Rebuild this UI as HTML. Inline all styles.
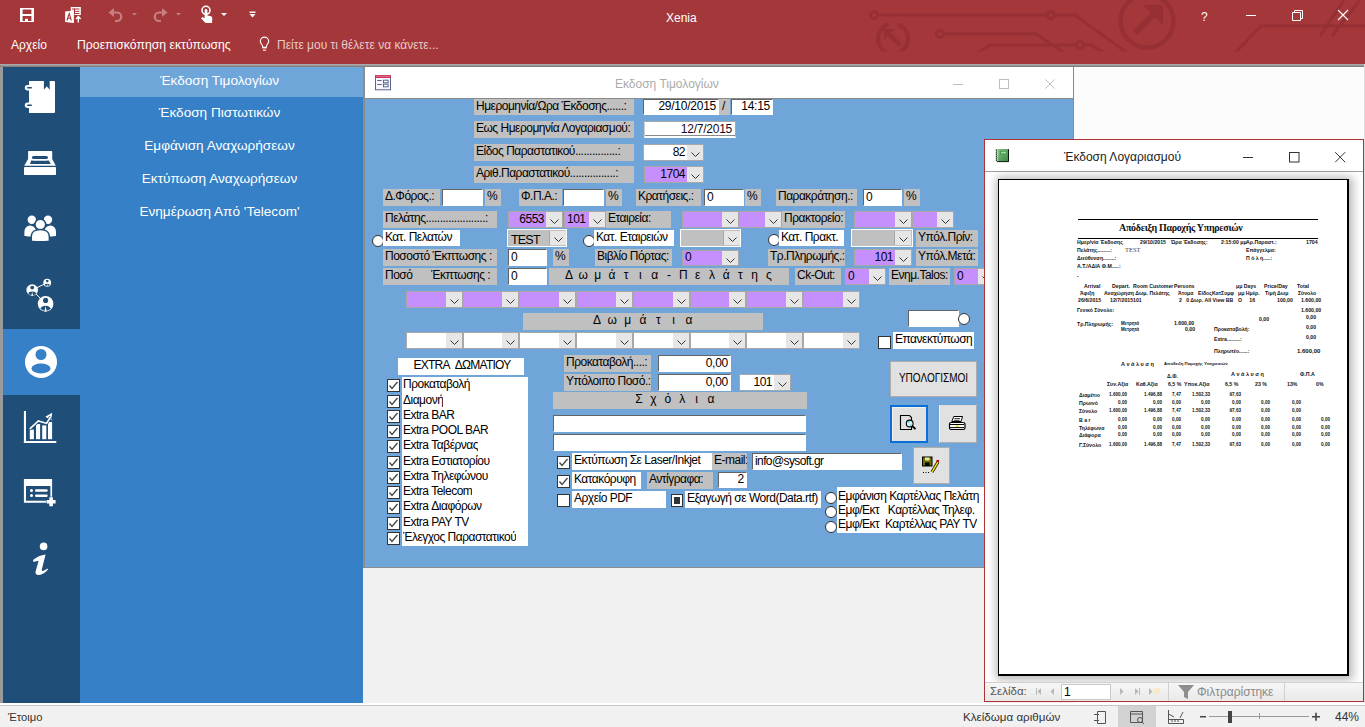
<!DOCTYPE html><html><head><meta charset="utf-8"><style>
html,body{margin:0;padding:0;width:1365px;height:727px;overflow:hidden;background:#F1F1F1;font-family:"Liberation Sans",sans-serif;}
body>div,body>svg{position:absolute;}
div{box-sizing:content-box;}
.t{position:absolute;white-space:nowrap;line-height:1;}
.lb{position:absolute;white-space:nowrap;overflow:hidden;font-size:12px;color:#000;}
.in{position:absolute;white-space:nowrap;overflow:hidden;font-size:12px;color:#000;background:#fff;border-top:1px solid #646464;border-left:1px solid #646464;border-right:1px solid #fff;border-bottom:1px solid #fff;letter-spacing:-0.25px}
.ab{position:absolute}
</style></head><body>
<div style="left:0px;top:0px;width:1365px;height:64px;background:#A4373A;"></div>
<svg style="left:0;top:0" width="1365" height="64" viewBox="0 0 1365 64">
<defs><clipPath id="cl"><rect x="0" y="0" width="1365" height="51.5"/></clipPath></defs>
<g stroke="#963035" stroke-width="3" fill="none" clip-path="url(#cl)">
<path d="M874 15 H1075 L1130 55"/>
<circle cx="874" cy="15" r="3.5" fill="#A4373A"/>
<circle cx="1051" cy="15" r="3.5" fill="#A4373A"/>
<path d="M940 34 H1036 L1068 55"/>
<circle cx="940" cy="34" r="3.5" fill="#A4373A"/>
<path d="M974 55 L990 45 H1091 L1108 55"/>
<circle cx="1080" cy="45" r="3.5" fill="#A4373A"/>
<path d="M897.5 24.5 A15 15 0 1 1 888.5 24.5" stroke-width="4"/>
<path d="M887 32 L900 45" stroke-width="4.5"/>
<path d="M884 29 H895 L884 40 Z" fill="#963035" stroke="none"/>
<circle cx="1147" cy="21" r="26.5" stroke-width="4.5"/>
<path d="M1135 33 L1156 12" stroke-width="6"/>
<path d="M1163 5 V25 L1143 5 Z" fill="#963035" stroke="none"/>
<path d="M1233 55 L1261 26 H1365"/>
<path d="M1320 36 L1344 0 M1332 36 L1360 0"/>
</g></svg>
<svg style="left:0;top:0" width="270" height="30" viewBox="0 0 270 30">
<path d="M20 8 H34 V22 H20 Z M22.6 9.5 V14 H31.4 V9.5 Z M22.6 16 V21 H25 V18.7 H28 V21 H31.4 V16 Z" fill="#fff" fill-rule="evenodd"/>
<path d="M70.8 7 H80.8 V15 H70.8 Z" fill="#fff"/>
<path d="M72 9 H79.5 M72 11.3 H79.5 M72 13.5 H79.5 M74.5 8.5 V14.5" stroke="#A4373A" stroke-width="1"/>
<path d="M65.1 11.5 L73.9 10.5 V23 L65.1 22 Z" fill="#fff"/>
<path d="M67 20.5 L69.2 13.5 L71.3 20.5 M67.8 18.3 H70.6" stroke="#A4373A" stroke-width="1.1" fill="none"/>
<path d="M78.3 22.6 V17 M76 19 L78.3 16.5 L80.6 19" stroke="#fff" stroke-width="1.4" fill="none"/>
<g stroke="#C57F82" stroke-width="2.2" fill="none">
<path d="M111 12.5 H117 A4.2 4.2 0 0 1 117 21 H115"/>
<path d="M165 12.5 H159 A4.2 4.2 0 0 0 159 21 H161"/>
</g>
<path d="M108.5 12.5 L114 8 V17 Z" fill="#C57F82"/>
<path d="M167.5 12.5 L162 8 V17 Z" fill="#C57F82"/>
<path d="M132 13 H137 L134.5 15.5 Z" fill="#C57F82"/>
<path d="M176 13 H181 L178.5 15.5 Z" fill="#C57F82"/>
<circle cx="206" cy="10.3" r="4" fill="none" stroke="#fff" stroke-width="1.6"/>
<path d="M204.6 10.5 A1.4 1.4 0 0 1 207.4 10.5 V15.5 L211 16.3 Q212.4 16.8 212.3 18.5 L212 23 H205.5 L201 18.3 L202.5 17 L204.6 18.2 Z" fill="#fff"/>
<path d="M221 13 H227 L224 16 Z" fill="#fff"/>
<rect x="249.5" y="11.5" width="6" height="1.4" fill="#fff"/>
<path d="M249.5 14 H255.5 L252.5 17.5 Z" fill="#fff"/>
</svg>
<div class="t" style="left:666px;top:11.5px;font-size:12px;color:#fff;">Xenia</div>
<svg style="left:1190;top:0" width="175" height="32" viewBox="1190 0 175 32">
<text x="1201" y="20.5" font-size="12" font-family="Liberation Sans" fill="#fff">?</text>
<rect x="1246" y="15" width="10" height="1" fill="#fff"/>
<path d="M1292.5 12.5 H1300.5 V20.5 H1292.5 Z M1294.5 12.5 V10.5 H1302.5 V18.5 H1300.5" fill="none" stroke="#fff" stroke-width="1"/>
<path d="M1338 10 L1348 20 M1348 10 L1338 20" stroke="#fff" stroke-width="1.1"/>
</svg>
<div class="t" style="left:11px;top:39px;font-size:12px;color:#fff;">Αρχείο</div>
<div class="t" style="left:77px;top:39px;font-size:12.25px;color:#fff;">Προεπισκόπηση εκτύπωσης</div>
<svg style="left:256;top:35" width="14" height="18" viewBox="0 0 14 18">
<path d="M6.6 12 V11 C6.6 9.8 4.3 8.8 4.3 6.3 A4.2 4.2 0 0 1 12.7 6.3 C12.7 8.8 10.4 9.8 10.4 11 V12" fill="none" stroke="#fff" stroke-width="1.1"/>
<path d="M6.2 12.6 H10.8" stroke="#fff" stroke-width="1.6"/>
<path d="M7 15.2 H10" stroke="#fff" stroke-width="1.1"/>
</svg>
<div class="t" style="left:277px;top:39px;font-size:12px;color:#E9C9CA;">Πείτε μου τι θέλετε να κάνετε...</div>
<div style="left:0px;top:64px;width:1365px;height:1px;background:#A9A9A9;"></div>
<div style="left:0px;top:65px;width:1365px;height:1px;background:#979797;"></div>
<div style="left:0px;top:66px;width:1365px;height:1px;background:#857E7A;"></div>
<div style="left:0px;top:67px;width:3px;height:636px;background:#9A9A9A;"></div>
<div style="left:3px;top:67px;width:77px;height:636px;background:#1F4E79;"></div>
<div style="left:3px;top:329px;width:77px;height:66px;background:#3580C6;"></div>
<div style="left:80px;top:67px;width:283px;height:636px;background:#3580C6;"></div>
<div style="left:80px;top:67px;width:283px;height:30px;background:#6FA6DA;"></div>
<div style="left:363px;top:67px;width:2px;height:501px;background:#8C8C8C;"></div>
<div style="left:363px;top:568px;width:2px;height:135px;background:#F1F1F1;"></div>
<div class="t" style="left:78px;top:74px;font-size:13.6px;color:#fff;width:283px;text-align:center;">Έκδοση Τιμολογίων</div>
<div class="t" style="left:78px;top:106px;font-size:13.6px;color:#fff;width:283px;text-align:center;">Έκδοση Πιστωτικών</div>
<div class="t" style="left:78px;top:139px;font-size:13.6px;color:#fff;width:283px;text-align:center;">Εμφάνιση Αναχωρήσεων</div>
<div class="t" style="left:78px;top:172px;font-size:13.6px;color:#fff;width:283px;text-align:center;">Εκτύπωση Αναχωρήσεων</div>
<div class="t" style="left:78px;top:205px;font-size:13.6px;color:#fff;width:283px;text-align:center;">Ενημέρωση Από 'Telecom'</div>
<svg style="left:0;top:67" width="80" height="560" viewBox="0 67 80 560">
<g fill="#fff">
<!-- 1 notebook -->
<path d="M29 81 H43.9 V89.8 L46.8 86.3 L49.7 89.8 V81 H54 Q55 81 55 82 V112 Q55 113 54 113 H29 Z"/>
<rect x="24.8" y="85" width="8.5" height="5.5" rx="2.75"/>
<rect x="24.8" y="102.5" width="8.5" height="5.5" rx="2.75"/>
</g>
<rect x="27" y="87" width="5" height="1.6" rx="0.8" fill="#1F4E79"/>
<rect x="27" y="104.5" width="5" height="1.6" rx="0.8" fill="#1F4E79"/>
<!-- 2 bed -->
<path d="M28.6 151 H51.7 Q52.2 151 52.2 152 V159 L55.8 165.8 H24.2 L28.1 159 V152 Q28.1 151 28.6 151 Z" fill="#fff"/>
<rect x="24" y="167" width="32" height="8" rx="0.8" fill="#fff"/>
<rect x="31.9" y="155.9" width="16.1" height="3.2" rx="1.6" fill="#1F4E79"/>
<path d="M30 164 L31.2 160.6 Q32.5 160.2 33.5 160.8 H46.5 Q47.5 160.2 48.8 160.6 L50.8 164 Z" fill="#1F4E79"/>
<!-- 3 people -->
<g fill="#fff" stroke="#1F4E79" stroke-width="1.6">
<circle cx="31.8" cy="219.8" r="5"/>
<path d="M23.6 236.5 V231.5 C23.6 227.5 26.5 224.8 30 224.8 C33.5 224.8 37 227.5 37 231.5 V237.3 Q30 237.8 23.6 236.5 Z"/>
<circle cx="48" cy="219.8" r="5"/>
<path d="M43.4 237.3 V231.5 C43.4 227.5 46.9 224.8 50.4 224.8 C53.9 224.8 56.8 227.5 56.8 231.5 V236.5 Q50.4 237.8 43.4 237.3 Z"/>
<circle cx="40.3" cy="224.6" r="5.4"/>
<path d="M31.2 241.2 V236.5 C31.2 232.2 35 229.5 40.3 229.5 C45.6 229.5 49.4 232.2 49.4 236.5 V241.2 Q40.3 242.6 31.2 241.2 Z"/>
</g>
<!-- 4 network -->
<path d="M32.2 290 L47.2 282.7 M32.2 290 L45.6 303.7" stroke="#fff" stroke-width="1"/>
<clipPath id="p1"><circle cx="47.2" cy="282.7" r="3.30"/></clipPath>
<circle cx="47.2" cy="282.7" r="3.9" fill="#fff"/>
<g clip-path="url(#p1)" fill="#1F4E79">
<circle cx="47.2" cy="281.06" r="1.29"/>
<ellipse cx="47.2" cy="286.01" rx="2.81" ry="2.34"/>
</g>
<path d="M47.2 283.87 L46.62 286.60 H47.79 Z" fill="#fff"/>
<clipPath id="p2"><circle cx="32.2" cy="290" r="5.20"/></clipPath>
<circle cx="32.2" cy="290" r="5.8" fill="#fff"/>
<g clip-path="url(#p2)" fill="#1F4E79">
<circle cx="32.2" cy="287.56" r="1.91"/>
<ellipse cx="32.2" cy="294.93" rx="4.18" ry="3.48"/>
</g>
<path d="M32.2 291.74 L31.33 295.80 H33.07 Z" fill="#fff"/>
<clipPath id="p3"><circle cx="45.6" cy="303.7" r="7.20"/></clipPath>
<circle cx="45.6" cy="303.7" r="7.8" fill="#fff"/>
<g clip-path="url(#p3)" fill="#1F4E79">
<circle cx="45.6" cy="300.42" r="2.57"/>
<ellipse cx="45.6" cy="310.33" rx="5.62" ry="4.68"/>
</g>
<path d="M45.6 306.04 L44.43 311.50 H46.77 Z" fill="#fff"/>
<!-- 5 person circle -->
<circle cx="41" cy="362" r="16" fill="#fff"/>
<circle cx="41" cy="354.5" r="5.5" fill="#3580C6"/>
<ellipse cx="41" cy="368.5" rx="9.5" ry="5" fill="#3580C6"/>
<!-- 6 chart -->
<g fill="#fff">
<rect x="23.9" y="411" width="2.1" height="32"/>
<rect x="23.9" y="441" width="32.4" height="2"/>
<rect x="29.8" y="429.6" width="4.1" height="9.6"/>
<rect x="36" y="424" width="4.1" height="15.2"/>
<rect x="42.2" y="425.4" width="4.1" height="13.8"/>
<rect x="48" y="422" width="4.1" height="17.2"/>
<path d="M45.3 416.8 L52.1 412.7 L51.5 420.6 Z"/>
</g>
<path d="M29.8 428.9 L38.4 421 L46.6 423.4 L50.8 416.5" fill="none" stroke="#1F4E79" stroke-width="3.2"/>
<path d="M29.8 428.9 L38.4 421 L46.6 423.4 L50.8 416.5" fill="none" stroke="#fff" stroke-width="1.6"/>
<!-- 7 list window -->
<path d="M23.9 479.1 H52.1 V502.8 H23.9 Z M26 486 V500.8 H50.4 V486 Z" fill="#fff" fill-rule="evenodd"/>
<circle cx="31.5" cy="490.4" r="1.5" fill="#fff"/>
<circle cx="31.5" cy="495.6" r="1.5" fill="#fff"/>
<rect x="35" y="489.2" width="12.7" height="2.5" rx="1.2" fill="#fff"/>
<rect x="35" y="494.4" width="12.7" height="2.5" rx="1.2" fill="#fff"/>
<path d="M51.1 496.8 V506.8 M46.1 501.8 H56.1" stroke="#1F4E79" stroke-width="7"/>
<path d="M51.1 497.3 V506.3 M46.6 501.8 H55.6" stroke="#fff" stroke-width="3.6"/>
<!-- 8 info i -->
<circle cx="43.6" cy="546.4" r="3.8" fill="#fff"/>
<path d="M33 560 Q38.5 555.2 45.6 554.4 L41.8 569.5 Q41.4 571.3 42.6 571 Q45 570.3 47.5 568.4 L48 569.6 Q44 574.6 38.8 575 Q35 575.2 35.6 571.6 L38.6 560.8 Q36.2 561.2 33.6 562 Z" fill="#fff"/>
</svg>
<div style="left:1074px;top:67px;width:291px;height:636px;background:#FCFCFC;"></div>
<div style="left:365px;top:568px;width:709px;height:135px;background:#F1F1F1;"></div>
<div style="left:0px;top:703px;width:1365px;height:2px;background:#FFFFFF;"></div>
<div style="left:0px;top:705px;width:1365px;height:1px;background:#C6C6C6;"></div>
<div style="left:0px;top:706px;width:1365px;height:21px;background:#F1F1F1;"></div>
<div style="left:1364px;top:64px;width:1px;height:639px;background:#DEDEDE;"></div>
<div style="left:365px;top:67px;width:708px;height:31px;background:#FFFFFF;"></div>
<div style="left:365px;top:98px;width:708px;height:1px;background:#8A8A8A;"></div>
<div style="left:365px;top:99px;width:708px;height:468px;background:#6FA5D8;"></div>
<div style="left:1073px;top:67px;width:1px;height:501px;background:#8A8A8A;"></div>
<div style="left:365px;top:567px;width:709px;height:1px;background:#8A8A8A;"></div>
<svg style="left:374;top:74" width="18" height="17" viewBox="0 0 18 17">
<rect x="1.5" y="1.5" width="15" height="14.3" fill="#F6F6FC" stroke="#4A5684" stroke-width="0.9"/>
<rect x="1" y="1" width="16" height="3" fill="#C8325A"/>
<rect x="2" y="1.8" width="14" height="1" fill="#E07A95"/>
<rect x="3.2" y="6.1" width="4.5" height="0.9" fill="#4A5684"/>
<rect x="3.2" y="10.1" width="4.5" height="0.9" fill="#4A5684"/>
<rect x="9.5" y="6.2" width="4.6" height="2.6" fill="#fff" stroke="#4A5684" stroke-width="0.9"/>
<rect x="9.5" y="10.2" width="4.6" height="2.6" fill="#fff" stroke="#4A5684" stroke-width="0.9"/>
</svg>
<div class="t" style="left:615px;top:78px;font-size:12px;color:#ABABAB;">Εκδοση Τιμολογίων</div>
<svg style="left:940;top:70" width="125" height="25" viewBox="940 70 125 25">
<rect x="953" y="84" width="10" height="1" fill="#BDBDBD"/>
<rect x="999.5" y="79.5" width="9" height="9" fill="none" stroke="#BDBDBD" stroke-width="1"/>
<path d="M1045.5 79.5 L1054.5 88.5 M1054.5 79.5 L1045.5 88.5" stroke="#BDBDBD" stroke-width="1"/>
</svg>
<div class="lb" style="left:474px;top:99px;width:158px;height:16px;line-height:14px;background:#C0C0C0;padding-left:2px;text-align:left;letter-spacing:-0.5px;">Ημερομηνία/Ωρα Έκδοσης......:</div>
<div style="left:719px;top:99px;width:11px;height:16px;background:#C0C0C0;"></div>
<div class="in" style="left:643px;top:99px;width:72px;height:14px;line-height:13px;text-align:right;padding-right:2px;">29/10/2015</div>
<div class="t" style="left:722px;top:100px;font-size:12px;color:#000;">/</div>
<div class="in" style="left:731px;top:99px;width:38px;height:14px;line-height:13px;text-align:right;padding-right:2px;border-top:1px solid #646464;border-left:1px solid #646464;">14:15</div>
<div class="lb" style="left:474px;top:121px;width:158px;height:17px;line-height:15px;background:#C0C0C0;padding-left:2px;text-align:left;letter-spacing:-0.5px;">Εως Ημερομηνία Λογαριασμού:</div>
<div class="in" style="left:644px;top:121px;width:87px;height:14px;line-height:14px;text-align:right;padding-right:3px;border:1px solid #A8A8A8;border-left-color:#D0D0D0;border-bottom:2px solid #fff;box-shadow:inset 0 -1px 0 #8A8A8A;color:#1a0a20">12/7/2015</div>
<div class="lb" style="left:474px;top:144px;width:158px;height:17px;line-height:15px;background:#C0C0C0;padding-left:2px;text-align:left;letter-spacing:-0.5px;">Είδος Παραστατικού...............:</div>
<div style="left:643px;top:144px;width:61px;height:17px;background:#A8A8A8"></div>
<div class="lb" style="left:644px;top:145px;width:41px;height:15px;line-height:14px;background:#FFFFFF;text-align:right;padding-right:2px;letter-spacing:-0.5px">82</div>
<div style="left:687px;top:145px;width:16px;height:15px;background:#E6E6E6"><svg width="9" height="5" viewBox="0 0 9 5" style="position:absolute;left:4px;top:7px"><path d="M0.5 0.5 L4.5 4.5 L8.5 0.5" fill="none" stroke="#333" stroke-width="1"/></svg></div>
<div class="lb" style="left:474px;top:166px;width:158px;height:17px;line-height:15px;background:#C0C0C0;padding-left:2px;text-align:left;letter-spacing:-0.5px;">Αριθ.Παραστατικού................:</div>
<div style="left:644px;top:166px;width:60px;height:17px;background:#A8A8A8"></div>
<div class="lb" style="left:645px;top:167px;width:40px;height:15px;line-height:14px;background:#C590FE;text-align:right;padding-right:2px;letter-spacing:-0.5px">1704</div>
<div style="left:687px;top:167px;width:16px;height:15px;background:#E6E6E6"><svg width="9" height="5" viewBox="0 0 9 5" style="position:absolute;left:4px;top:7px"><path d="M0.5 0.5 L4.5 4.5 L8.5 0.5" fill="none" stroke="#333" stroke-width="1"/></svg></div>
<div class="lb" style="left:383px;top:189px;width:55px;height:17px;line-height:15px;background:#C0C0C0;padding-left:2px;text-align:left;letter-spacing:-0.5px;">Δ.Φόρος.:</div>
<div class="in" style="left:442px;top:189px;width:37px;height:15px;line-height:14px;text-align:left;padding-left:2px;"></div>
<div class="lb" style="left:485px;top:189px;width:14px;height:17px;line-height:15px;background:#C0C0C0;padding-left:2px;text-align:left;letter-spacing:-0.5px;">%</div>
<div class="lb" style="left:519px;top:189px;width:41px;height:17px;line-height:15px;background:#C0C0C0;padding-left:2px;text-align:left;letter-spacing:-0.5px;">Φ.Π.Α.:</div>
<div class="in" style="left:563px;top:189px;width:37px;height:15px;line-height:14px;text-align:left;padding-left:2px;"></div>
<div class="lb" style="left:606px;top:189px;width:14px;height:17px;line-height:15px;background:#C0C0C0;padding-left:2px;text-align:left;letter-spacing:-0.5px;">%</div>
<div class="lb" style="left:636px;top:189px;width:63px;height:17px;line-height:15px;background:#C0C0C0;padding-left:2px;text-align:left;letter-spacing:-0.5px;">Κρατήσεις.:</div>
<div class="in" style="left:704px;top:189px;width:36px;height:15px;line-height:14px;text-align:left;padding-left:2px;">0</div>
<div class="lb" style="left:745px;top:189px;width:14px;height:17px;line-height:15px;background:#C0C0C0;padding-left:2px;text-align:left;letter-spacing:-0.5px;">%</div>
<div class="lb" style="left:776px;top:189px;width:79px;height:17px;line-height:15px;background:#C0C0C0;padding-left:2px;text-align:left;letter-spacing:-0.5px;">Παρακράτηση.:</div>
<div class="in" style="left:863px;top:189px;width:35px;height:15px;line-height:14px;text-align:left;padding-left:2px;">0</div>
<div class="lb" style="left:904px;top:189px;width:14px;height:17px;line-height:15px;background:#C0C0C0;padding-left:2px;text-align:left;letter-spacing:-0.5px;">%</div>
<div class="lb" style="left:383px;top:211px;width:112px;height:17px;line-height:15px;background:#C0C0C0;padding-left:2px;text-align:left;letter-spacing:-0.5px;">Πελάτης.....................:</div>
<div style="left:508px;top:211px;width:55px;height:17px;background:#A8A8A8"></div>
<div class="lb" style="left:509px;top:212px;width:35px;height:15px;line-height:14px;background:#C590FE;text-align:right;padding-right:2px;letter-spacing:-0.5px">6553</div>
<div style="left:546px;top:212px;width:16px;height:15px;background:#E6E6E6"><svg width="9" height="5" viewBox="0 0 9 5" style="position:absolute;left:4px;top:7px"><path d="M0.5 0.5 L4.5 4.5 L8.5 0.5" fill="none" stroke="#333" stroke-width="1"/></svg></div>
<div style="left:564px;top:211px;width:42px;height:17px;background:#A8A8A8"></div>
<div class="lb" style="left:565px;top:212px;width:22px;height:15px;line-height:14px;background:#C590FE;text-align:left;padding-left:2px;letter-spacing:-0.5px">101</div>
<div style="left:589px;top:212px;width:16px;height:15px;background:#E6E6E6"><svg width="9" height="5" viewBox="0 0 9 5" style="position:absolute;left:4px;top:7px"><path d="M0.5 0.5 L4.5 4.5 L8.5 0.5" fill="none" stroke="#333" stroke-width="1"/></svg></div>
<div class="lb" style="left:606px;top:211px;width:63px;height:17px;line-height:15px;background:#C0C0C0;padding-left:2px;text-align:left;letter-spacing:-0.5px;">Εταιρεία:</div>
<div style="left:682px;top:211px;width:57px;height:17px;background:#A8A8A8"></div>
<div class="lb" style="left:683px;top:212px;width:37px;height:15px;line-height:14px;background:#C590FE;text-align:right;padding-right:2px;letter-spacing:-0.5px"></div>
<div style="left:722px;top:212px;width:16px;height:15px;background:#E6E6E6"><svg width="9" height="5" viewBox="0 0 9 5" style="position:absolute;left:4px;top:7px"><path d="M0.5 0.5 L4.5 4.5 L8.5 0.5" fill="none" stroke="#333" stroke-width="1"/></svg></div>
<div style="left:738px;top:211px;width:44px;height:17px;background:#A8A8A8"></div>
<div class="lb" style="left:739px;top:212px;width:24px;height:15px;line-height:14px;background:#C590FE;text-align:right;padding-right:2px;letter-spacing:-0.5px"></div>
<div style="left:765px;top:212px;width:16px;height:15px;background:#E6E6E6"><svg width="9" height="5" viewBox="0 0 9 5" style="position:absolute;left:4px;top:7px"><path d="M0.5 0.5 L4.5 4.5 L8.5 0.5" fill="none" stroke="#333" stroke-width="1"/></svg></div>
<div class="lb" style="left:782px;top:211px;width:61px;height:17px;line-height:15px;background:#C0C0C0;padding-left:2px;text-align:left;letter-spacing:-0.5px;">Πρακτορείο:</div>
<div style="left:854px;top:211px;width:58px;height:17px;background:#A8A8A8"></div>
<div class="lb" style="left:855px;top:212px;width:38px;height:15px;line-height:14px;background:#C590FE;text-align:right;padding-right:2px;letter-spacing:-0.5px"></div>
<div style="left:895px;top:212px;width:16px;height:15px;background:#E6E6E6"><svg width="9" height="5" viewBox="0 0 9 5" style="position:absolute;left:4px;top:7px"><path d="M0.5 0.5 L4.5 4.5 L8.5 0.5" fill="none" stroke="#333" stroke-width="1"/></svg></div>
<div style="left:912px;top:211px;width:42px;height:17px;background:#A8A8A8"></div>
<div class="lb" style="left:913px;top:212px;width:22px;height:15px;line-height:14px;background:#C590FE;text-align:right;padding-right:2px;letter-spacing:-0.5px"></div>
<div style="left:937px;top:212px;width:16px;height:15px;background:#E6E6E6"><svg width="9" height="5" viewBox="0 0 9 5" style="position:absolute;left:4px;top:7px"><path d="M0.5 0.5 L4.5 4.5 L8.5 0.5" fill="none" stroke="#333" stroke-width="1"/></svg></div>
<svg style="left:370.5px;top:233.5px" width="14" height="14"><circle cx="7" cy="7" r="5.5" fill="#fff" stroke="#333" stroke-width="1"/></svg>
<div class="lb" style="left:383px;top:230px;width:75px;height:16px;line-height:14px;background:#FFFFFF;padding-left:2px;text-align:left;letter-spacing:-0.5px;">Κατ. Πελατών</div>
<div style="left:507px;top:229px;width:58px;height:16px;background:#C0C0C0;border:1px solid #fff"></div>
<div class="t" style="left:511px;top:234px;font-size:12.5px;color:#000;letter-spacing:-0.8px;">TEST</div>
<div style="left:549px;top:231px;width:16px;height:14px;background:#E6E6E6;border-left:1px solid #A8A8A8"><svg width="9" height="5" viewBox="0 0 9 5" style="position:absolute;left:4px;top:6px"><path d="M0.5 0.5 L4.5 4.5 L8.5 0.5" fill="none" stroke="#333" stroke-width="1"/></svg></div>
<svg style="left:582px;top:233.5px" width="14" height="14"><circle cx="7" cy="7" r="5.5" fill="#fff" stroke="#333" stroke-width="1"/></svg>
<div class="lb" style="left:594px;top:230px;width:78px;height:16px;line-height:14px;background:#FFFFFF;padding-left:2px;text-align:left;letter-spacing:-0.5px;">Κατ. Εταιρειών</div>
<div style="left:680px;top:229px;width:59px;height:16px;background:#C0C0C0;border:1px solid #fff"></div>
<div style="left:723px;top:231px;width:16px;height:14px;background:#E6E6E6;border-left:1px solid #A8A8A8"><svg width="9" height="5" viewBox="0 0 9 5" style="position:absolute;left:4px;top:6px"><path d="M0.5 0.5 L4.5 4.5 L8.5 0.5" fill="none" stroke="#333" stroke-width="1"/></svg></div>
<svg style="left:766.5px;top:233px" width="14" height="14"><circle cx="7" cy="7" r="5.5" fill="#fff" stroke="#333" stroke-width="1"/></svg>
<div class="lb" style="left:779px;top:230px;width:63px;height:16px;line-height:14px;background:#FFFFFF;padding-left:2px;text-align:left;letter-spacing:-0.5px;">Κατ. Πρακτ.</div>
<div style="left:851px;top:229px;width:60px;height:16px;background:#C0C0C0;border:1px solid #fff"></div>
<div style="left:894px;top:231px;width:16px;height:14px;background:#E6E6E6;border-left:1px solid #A8A8A8"><svg width="9" height="5" viewBox="0 0 9 5" style="position:absolute;left:4px;top:6px"><path d="M0.5 0.5 L4.5 4.5 L8.5 0.5" fill="none" stroke="#333" stroke-width="1"/></svg></div>
<div class="lb" style="left:916px;top:230px;width:60px;height:17px;line-height:15px;background:#C0C0C0;padding-left:2px;text-align:left;letter-spacing:-0.5px;">Υπόλ.Πρίν:</div>
<div class="lb" style="left:383px;top:249px;width:112px;height:17px;line-height:15px;background:#C0C0C0;padding-left:2px;text-align:left;letter-spacing:-0.5px;">Ποσοστό Έκπτωσης :</div>
<div class="in" style="left:508px;top:249px;width:35px;height:15px;line-height:14px;text-align:left;padding-left:2px;">0</div>
<div class="lb" style="left:553px;top:249px;width:14px;height:17px;line-height:15px;background:#C0C0C0;padding-left:2px;text-align:left;letter-spacing:-0.5px;">%</div>
<div class="lb" style="left:595px;top:249px;width:75px;height:17px;line-height:15px;background:#C0C0C0;padding-left:2px;text-align:left;letter-spacing:-0.5px;">Βιβλίο Πόρτας:</div>
<div style="left:682px;top:250px;width:57px;height:16px;background:#A8A8A8"></div>
<div class="lb" style="left:683px;top:251px;width:37px;height:14px;line-height:13px;background:#C590FE;text-align:left;padding-left:2px;letter-spacing:-0.5px">0</div>
<div style="left:722px;top:251px;width:16px;height:14px;background:#E6E6E6"><svg width="9" height="5" viewBox="0 0 9 5" style="position:absolute;left:4px;top:7px"><path d="M0.5 0.5 L4.5 4.5 L8.5 0.5" fill="none" stroke="#333" stroke-width="1"/></svg></div>
<div class="lb" style="left:768px;top:249px;width:75px;height:17px;line-height:15px;background:#C0C0C0;padding-left:2px;text-align:left;letter-spacing:-0.5px;">Τρ.Πληρωμής.:</div>
<div style="left:854px;top:249px;width:58px;height:17px;background:#A8A8A8"></div>
<div class="lb" style="left:855px;top:250px;width:38px;height:15px;line-height:14px;background:#C590FE;text-align:right;padding-right:2px;letter-spacing:-0.5px">101</div>
<div style="left:895px;top:250px;width:16px;height:15px;background:#E6E6E6"><svg width="9" height="5" viewBox="0 0 9 5" style="position:absolute;left:4px;top:7px"><path d="M0.5 0.5 L4.5 4.5 L8.5 0.5" fill="none" stroke="#333" stroke-width="1"/></svg></div>
<div class="lb" style="left:916px;top:249px;width:60px;height:17px;line-height:15px;background:#C0C0C0;padding-left:2px;text-align:left;letter-spacing:-0.5px;">Υπόλ.Μετά:</div>
<div class="lb" style="left:383px;top:268px;width:112px;height:17px;line-height:15px;background:#C0C0C0;padding-left:2px;text-align:left;letter-spacing:-0.5px;">Ποσό</div>
<div class="lb" style="left:431px;top:268px;width:66px;height:17px;line-height:15px;background:transparent;padding-left:0px;text-align:left;letter-spacing:-0.5px;">Έκπτωσης :</div>
<div class="in" style="left:508px;top:268px;width:35px;height:15px;line-height:14px;text-align:left;padding-left:2px;">0</div>
<div class="lb" style="left:549px;top:268px;width:238px;height:17px;line-height:15px;background:#C0C0C0;padding-left:2px;text-align:left;letter-spacing:-0.5px;"></div>
<div class="t" style="left:559.0px;top:268px;width:20px;height:17px;line-height:15px;text-align:center;font-size:12px;color:#000">Δ</div>
<div class="t" style="left:573.3px;top:268px;width:20px;height:17px;line-height:15px;text-align:center;font-size:12px;color:#000">ω</div>
<div class="t" style="left:587.6px;top:268px;width:20px;height:17px;line-height:15px;text-align:center;font-size:12px;color:#000">μ</div>
<div class="t" style="left:601.9px;top:268px;width:20px;height:17px;line-height:15px;text-align:center;font-size:12px;color:#000">ά</div>
<div class="t" style="left:616.1px;top:268px;width:20px;height:17px;line-height:15px;text-align:center;font-size:12px;color:#000">τ</div>
<div class="t" style="left:630.4px;top:268px;width:20px;height:17px;line-height:15px;text-align:center;font-size:12px;color:#000">ι</div>
<div class="t" style="left:644.7px;top:268px;width:20px;height:17px;line-height:15px;text-align:center;font-size:12px;color:#000">α</div>
<div class="t" style="left:659.0px;top:268px;width:20px;height:17px;line-height:15px;text-align:center;font-size:12px;color:#000">-</div>
<div class="t" style="left:673.3px;top:268px;width:20px;height:17px;line-height:15px;text-align:center;font-size:12px;color:#000">Π</div>
<div class="t" style="left:687.6px;top:268px;width:20px;height:17px;line-height:15px;text-align:center;font-size:12px;color:#000">ε</div>
<div class="t" style="left:701.9px;top:268px;width:20px;height:17px;line-height:15px;text-align:center;font-size:12px;color:#000">λ</div>
<div class="t" style="left:716.1px;top:268px;width:20px;height:17px;line-height:15px;text-align:center;font-size:12px;color:#000">ά</div>
<div class="t" style="left:730.4px;top:268px;width:20px;height:17px;line-height:15px;text-align:center;font-size:12px;color:#000">τ</div>
<div class="t" style="left:744.7px;top:268px;width:20px;height:17px;line-height:15px;text-align:center;font-size:12px;color:#000">η</div>
<div class="t" style="left:759.0px;top:268px;width:20px;height:17px;line-height:15px;text-align:center;font-size:12px;color:#000">ς</div>
<div class="lb" style="left:795px;top:268px;width:44px;height:17px;line-height:15px;background:#C0C0C0;padding-left:2px;text-align:left;letter-spacing:-0.5px;">Ck-Out:</div>
<div style="left:845px;top:268px;width:41px;height:17px;background:#A8A8A8"></div>
<div class="lb" style="left:846px;top:269px;width:21px;height:15px;line-height:14px;background:#C590FE;text-align:left;padding-left:2px;letter-spacing:-0.5px">0</div>
<div style="left:869px;top:269px;width:16px;height:15px;background:#E6E6E6"><svg width="9" height="5" viewBox="0 0 9 5" style="position:absolute;left:4px;top:7px"><path d="M0.5 0.5 L4.5 4.5 L8.5 0.5" fill="none" stroke="#333" stroke-width="1"/></svg></div>
<div class="lb" style="left:889px;top:268px;width:59px;height:17px;line-height:15px;background:#C0C0C0;padding-left:2px;text-align:left;letter-spacing:-0.5px;">Ενημ.Talos:</div>
<div style="left:954px;top:268px;width:41px;height:17px;background:#A8A8A8"></div>
<div class="lb" style="left:955px;top:269px;width:21px;height:15px;line-height:14px;background:#C590FE;text-align:left;padding-left:2px;letter-spacing:-0.5px">0</div>
<div style="left:978px;top:269px;width:16px;height:15px;background:#E6E6E6"><svg width="9" height="5" viewBox="0 0 9 5" style="position:absolute;left:4px;top:7px"><path d="M0.5 0.5 L4.5 4.5 L8.5 0.5" fill="none" stroke="#333" stroke-width="1"/></svg></div>
<div style="left:406px;top:291px;width:57px;height:17px;background:#A8A8A8"></div>
<div class="lb" style="left:407px;top:292px;width:37px;height:15px;line-height:14px;background:#C590FE;text-align:right;padding-right:2px;letter-spacing:-0.5px"></div>
<div style="left:446px;top:292px;width:16px;height:15px;background:#E6E6E6"><svg width="9" height="5" viewBox="0 0 9 5" style="position:absolute;left:4px;top:7px"><path d="M0.5 0.5 L4.5 4.5 L8.5 0.5" fill="none" stroke="#333" stroke-width="1"/></svg></div>
<div style="left:463px;top:291px;width:56px;height:17px;background:#A8A8A8"></div>
<div class="lb" style="left:464px;top:292px;width:36px;height:15px;line-height:14px;background:#C590FE;text-align:right;padding-right:2px;letter-spacing:-0.5px"></div>
<div style="left:502px;top:292px;width:16px;height:15px;background:#E6E6E6"><svg width="9" height="5" viewBox="0 0 9 5" style="position:absolute;left:4px;top:7px"><path d="M0.5 0.5 L4.5 4.5 L8.5 0.5" fill="none" stroke="#333" stroke-width="1"/></svg></div>
<div style="left:519px;top:291px;width:57px;height:17px;background:#A8A8A8"></div>
<div class="lb" style="left:520px;top:292px;width:37px;height:15px;line-height:14px;background:#C590FE;text-align:right;padding-right:2px;letter-spacing:-0.5px"></div>
<div style="left:559px;top:292px;width:16px;height:15px;background:#E6E6E6"><svg width="9" height="5" viewBox="0 0 9 5" style="position:absolute;left:4px;top:7px"><path d="M0.5 0.5 L4.5 4.5 L8.5 0.5" fill="none" stroke="#333" stroke-width="1"/></svg></div>
<div style="left:576px;top:291px;width:57px;height:17px;background:#A8A8A8"></div>
<div class="lb" style="left:577px;top:292px;width:37px;height:15px;line-height:14px;background:#C590FE;text-align:right;padding-right:2px;letter-spacing:-0.5px"></div>
<div style="left:616px;top:292px;width:16px;height:15px;background:#E6E6E6"><svg width="9" height="5" viewBox="0 0 9 5" style="position:absolute;left:4px;top:7px"><path d="M0.5 0.5 L4.5 4.5 L8.5 0.5" fill="none" stroke="#333" stroke-width="1"/></svg></div>
<div style="left:633px;top:291px;width:57px;height:17px;background:#A8A8A8"></div>
<div class="lb" style="left:634px;top:292px;width:37px;height:15px;line-height:14px;background:#C590FE;text-align:right;padding-right:2px;letter-spacing:-0.5px"></div>
<div style="left:673px;top:292px;width:16px;height:15px;background:#E6E6E6"><svg width="9" height="5" viewBox="0 0 9 5" style="position:absolute;left:4px;top:7px"><path d="M0.5 0.5 L4.5 4.5 L8.5 0.5" fill="none" stroke="#333" stroke-width="1"/></svg></div>
<div style="left:690px;top:291px;width:56px;height:17px;background:#A8A8A8"></div>
<div class="lb" style="left:691px;top:292px;width:36px;height:15px;line-height:14px;background:#C590FE;text-align:right;padding-right:2px;letter-spacing:-0.5px"></div>
<div style="left:729px;top:292px;width:16px;height:15px;background:#E6E6E6"><svg width="9" height="5" viewBox="0 0 9 5" style="position:absolute;left:4px;top:7px"><path d="M0.5 0.5 L4.5 4.5 L8.5 0.5" fill="none" stroke="#333" stroke-width="1"/></svg></div>
<div style="left:746px;top:291px;width:57px;height:17px;background:#A8A8A8"></div>
<div class="lb" style="left:747px;top:292px;width:37px;height:15px;line-height:14px;background:#C590FE;text-align:right;padding-right:2px;letter-spacing:-0.5px"></div>
<div style="left:786px;top:292px;width:16px;height:15px;background:#E6E6E6"><svg width="9" height="5" viewBox="0 0 9 5" style="position:absolute;left:4px;top:7px"><path d="M0.5 0.5 L4.5 4.5 L8.5 0.5" fill="none" stroke="#333" stroke-width="1"/></svg></div>
<div style="left:803px;top:291px;width:57px;height:17px;background:#A8A8A8"></div>
<div class="lb" style="left:804px;top:292px;width:37px;height:15px;line-height:14px;background:#C590FE;text-align:right;padding-right:2px;letter-spacing:-0.5px"></div>
<div style="left:843px;top:292px;width:16px;height:15px;background:#E6E6E6"><svg width="9" height="5" viewBox="0 0 9 5" style="position:absolute;left:4px;top:7px"><path d="M0.5 0.5 L4.5 4.5 L8.5 0.5" fill="none" stroke="#333" stroke-width="1"/></svg></div>
<div class="lb" style="left:523px;top:313px;width:238px;height:17px;line-height:15px;background:#C0C0C0;padding-left:2px;text-align:left;letter-spacing:-0.5px;"></div>
<div class="t" style="left:587.0px;top:313px;width:20px;height:17px;line-height:15px;text-align:center;font-size:12px;color:#000">Δ</div>
<div class="t" style="left:602.3px;top:313px;width:20px;height:17px;line-height:15px;text-align:center;font-size:12px;color:#000">ω</div>
<div class="t" style="left:617.7px;top:313px;width:20px;height:17px;line-height:15px;text-align:center;font-size:12px;color:#000">μ</div>
<div class="t" style="left:633.0px;top:313px;width:20px;height:17px;line-height:15px;text-align:center;font-size:12px;color:#000">ά</div>
<div class="t" style="left:648.3px;top:313px;width:20px;height:17px;line-height:15px;text-align:center;font-size:12px;color:#000">τ</div>
<div class="t" style="left:663.7px;top:313px;width:20px;height:17px;line-height:15px;text-align:center;font-size:12px;color:#000">ι</div>
<div class="t" style="left:679.0px;top:313px;width:20px;height:17px;line-height:15px;text-align:center;font-size:12px;color:#000">α</div>
<div style="left:406px;top:332px;width:57px;height:17px;background:#A8A8A8"></div>
<div class="lb" style="left:407px;top:333px;width:37px;height:15px;line-height:14px;background:#FFFFFF;text-align:right;padding-right:2px;letter-spacing:-0.5px"></div>
<div style="left:446px;top:333px;width:16px;height:15px;background:#E6E6E6"><svg width="9" height="5" viewBox="0 0 9 5" style="position:absolute;left:4px;top:7px"><path d="M0.5 0.5 L4.5 4.5 L8.5 0.5" fill="none" stroke="#333" stroke-width="1"/></svg></div>
<div style="left:463px;top:332px;width:56px;height:17px;background:#A8A8A8"></div>
<div class="lb" style="left:464px;top:333px;width:36px;height:15px;line-height:14px;background:#FFFFFF;text-align:right;padding-right:2px;letter-spacing:-0.5px"></div>
<div style="left:502px;top:333px;width:16px;height:15px;background:#E6E6E6"><svg width="9" height="5" viewBox="0 0 9 5" style="position:absolute;left:4px;top:7px"><path d="M0.5 0.5 L4.5 4.5 L8.5 0.5" fill="none" stroke="#333" stroke-width="1"/></svg></div>
<div style="left:519px;top:332px;width:57px;height:17px;background:#A8A8A8"></div>
<div class="lb" style="left:520px;top:333px;width:37px;height:15px;line-height:14px;background:#FFFFFF;text-align:right;padding-right:2px;letter-spacing:-0.5px"></div>
<div style="left:559px;top:333px;width:16px;height:15px;background:#E6E6E6"><svg width="9" height="5" viewBox="0 0 9 5" style="position:absolute;left:4px;top:7px"><path d="M0.5 0.5 L4.5 4.5 L8.5 0.5" fill="none" stroke="#333" stroke-width="1"/></svg></div>
<div style="left:576px;top:332px;width:57px;height:17px;background:#A8A8A8"></div>
<div class="lb" style="left:577px;top:333px;width:37px;height:15px;line-height:14px;background:#FFFFFF;text-align:right;padding-right:2px;letter-spacing:-0.5px"></div>
<div style="left:616px;top:333px;width:16px;height:15px;background:#E6E6E6"><svg width="9" height="5" viewBox="0 0 9 5" style="position:absolute;left:4px;top:7px"><path d="M0.5 0.5 L4.5 4.5 L8.5 0.5" fill="none" stroke="#333" stroke-width="1"/></svg></div>
<div style="left:633px;top:332px;width:57px;height:17px;background:#A8A8A8"></div>
<div class="lb" style="left:634px;top:333px;width:37px;height:15px;line-height:14px;background:#FFFFFF;text-align:right;padding-right:2px;letter-spacing:-0.5px"></div>
<div style="left:673px;top:333px;width:16px;height:15px;background:#E6E6E6"><svg width="9" height="5" viewBox="0 0 9 5" style="position:absolute;left:4px;top:7px"><path d="M0.5 0.5 L4.5 4.5 L8.5 0.5" fill="none" stroke="#333" stroke-width="1"/></svg></div>
<div style="left:690px;top:332px;width:56px;height:17px;background:#A8A8A8"></div>
<div class="lb" style="left:691px;top:333px;width:36px;height:15px;line-height:14px;background:#FFFFFF;text-align:right;padding-right:2px;letter-spacing:-0.5px"></div>
<div style="left:729px;top:333px;width:16px;height:15px;background:#E6E6E6"><svg width="9" height="5" viewBox="0 0 9 5" style="position:absolute;left:4px;top:7px"><path d="M0.5 0.5 L4.5 4.5 L8.5 0.5" fill="none" stroke="#333" stroke-width="1"/></svg></div>
<div style="left:746px;top:332px;width:57px;height:17px;background:#A8A8A8"></div>
<div class="lb" style="left:747px;top:333px;width:37px;height:15px;line-height:14px;background:#FFFFFF;text-align:right;padding-right:2px;letter-spacing:-0.5px"></div>
<div style="left:786px;top:333px;width:16px;height:15px;background:#E6E6E6"><svg width="9" height="5" viewBox="0 0 9 5" style="position:absolute;left:4px;top:7px"><path d="M0.5 0.5 L4.5 4.5 L8.5 0.5" fill="none" stroke="#333" stroke-width="1"/></svg></div>
<div style="left:803px;top:332px;width:57px;height:17px;background:#A8A8A8"></div>
<div class="lb" style="left:804px;top:333px;width:37px;height:15px;line-height:14px;background:#FFFFFF;text-align:right;padding-right:2px;letter-spacing:-0.5px"></div>
<div style="left:843px;top:333px;width:16px;height:15px;background:#E6E6E6"><svg width="9" height="5" viewBox="0 0 9 5" style="position:absolute;left:4px;top:7px"><path d="M0.5 0.5 L4.5 4.5 L8.5 0.5" fill="none" stroke="#333" stroke-width="1"/></svg></div>
<div class="in" style="left:908px;top:310px;width:47px;height:15px;line-height:14px;text-align:left;padding-left:2px;"></div>
<svg style="left:956.5px;top:312px" width="14" height="14"><circle cx="7" cy="7" r="5.5" fill="#fff" stroke="#333" stroke-width="1"/></svg>
<div style="left:878px;top:336px;width:11px;height:11px;background:#fff;border:1px solid #333"></div>
<div class="lb" style="left:893px;top:332px;width:79px;height:17px;line-height:15px;background:#FFFFFF;padding-left:2px;text-align:left;letter-spacing:-0.5px;">Επανεκτύπωση</div>
<div class="lb" style="left:398px;top:358px;width:124px;height:17px;line-height:15px;background:#FFFFFF;padding-left:2px;text-align:center;letter-spacing:-0.75px;">EXTRA&nbsp; ΔΩΜΑΤΙΟΥ</div>
<div style="left:402px;top:377px;width:126px;height:169px;background:#FFFFFF;"></div>
<div style="left:387px;top:379px;width:11px;height:11px;background:#fff;border:1px solid #333"><svg width="11" height="11" viewBox="0 0 11 11" style="position:absolute;left:0;top:0"><path d="M1.5 5.5 L4 8.5 L9.5 2" fill="none" stroke="#444" stroke-width="1.3"/></svg></div>
<div class="lb" style="left:403px;top:376px;height:17px;line-height:17px;letter-spacing:-0.5px">Προκαταβολή</div>
<div style="left:387px;top:395px;width:11px;height:11px;background:#fff;border:1px solid #333"><svg width="11" height="11" viewBox="0 0 11 11" style="position:absolute;left:0;top:0"><path d="M1.5 5.5 L4 8.5 L9.5 2" fill="none" stroke="#444" stroke-width="1.3"/></svg></div>
<div class="lb" style="left:403px;top:392px;height:17px;line-height:17px;letter-spacing:-0.5px">Διαμονή</div>
<div style="left:387px;top:410px;width:11px;height:11px;background:#fff;border:1px solid #333"><svg width="11" height="11" viewBox="0 0 11 11" style="position:absolute;left:0;top:0"><path d="M1.5 5.5 L4 8.5 L9.5 2" fill="none" stroke="#444" stroke-width="1.3"/></svg></div>
<div class="lb" style="left:403px;top:407px;height:17px;line-height:17px;letter-spacing:-0.5px">Extra BAR</div>
<div style="left:387px;top:425px;width:11px;height:11px;background:#fff;border:1px solid #333"><svg width="11" height="11" viewBox="0 0 11 11" style="position:absolute;left:0;top:0"><path d="M1.5 5.5 L4 8.5 L9.5 2" fill="none" stroke="#444" stroke-width="1.3"/></svg></div>
<div class="lb" style="left:403px;top:422px;height:17px;line-height:17px;letter-spacing:-0.5px">Extra POOL BAR</div>
<div style="left:387px;top:440px;width:11px;height:11px;background:#fff;border:1px solid #333"><svg width="11" height="11" viewBox="0 0 11 11" style="position:absolute;left:0;top:0"><path d="M1.5 5.5 L4 8.5 L9.5 2" fill="none" stroke="#444" stroke-width="1.3"/></svg></div>
<div class="lb" style="left:403px;top:437px;height:17px;line-height:17px;letter-spacing:-0.5px">Extra Ταβέρνας</div>
<div style="left:387px;top:456px;width:11px;height:11px;background:#fff;border:1px solid #333"><svg width="11" height="11" viewBox="0 0 11 11" style="position:absolute;left:0;top:0"><path d="M1.5 5.5 L4 8.5 L9.5 2" fill="none" stroke="#444" stroke-width="1.3"/></svg></div>
<div class="lb" style="left:403px;top:453px;height:17px;line-height:17px;letter-spacing:-0.5px">Extra Εστιατορίου</div>
<div style="left:387px;top:471px;width:11px;height:11px;background:#fff;border:1px solid #333"><svg width="11" height="11" viewBox="0 0 11 11" style="position:absolute;left:0;top:0"><path d="M1.5 5.5 L4 8.5 L9.5 2" fill="none" stroke="#444" stroke-width="1.3"/></svg></div>
<div class="lb" style="left:403px;top:468px;height:17px;line-height:17px;letter-spacing:-0.5px">Extra Τηλεφώνου</div>
<div style="left:387px;top:486px;width:11px;height:11px;background:#fff;border:1px solid #333"><svg width="11" height="11" viewBox="0 0 11 11" style="position:absolute;left:0;top:0"><path d="M1.5 5.5 L4 8.5 L9.5 2" fill="none" stroke="#444" stroke-width="1.3"/></svg></div>
<div class="lb" style="left:403px;top:483px;height:17px;line-height:17px;letter-spacing:-0.5px">Extra Telecom</div>
<div style="left:387px;top:501px;width:11px;height:11px;background:#fff;border:1px solid #333"><svg width="11" height="11" viewBox="0 0 11 11" style="position:absolute;left:0;top:0"><path d="M1.5 5.5 L4 8.5 L9.5 2" fill="none" stroke="#444" stroke-width="1.3"/></svg></div>
<div class="lb" style="left:403px;top:498px;height:17px;line-height:17px;letter-spacing:-0.5px">Extra Διαφόρων</div>
<div style="left:387px;top:517px;width:11px;height:11px;background:#fff;border:1px solid #333"><svg width="11" height="11" viewBox="0 0 11 11" style="position:absolute;left:0;top:0"><path d="M1.5 5.5 L4 8.5 L9.5 2" fill="none" stroke="#444" stroke-width="1.3"/></svg></div>
<div class="lb" style="left:403px;top:514px;height:17px;line-height:17px;letter-spacing:-0.5px">Extra PAY TV</div>
<div style="left:387px;top:532px;width:11px;height:11px;background:#fff;border:1px solid #333"><svg width="11" height="11" viewBox="0 0 11 11" style="position:absolute;left:0;top:0"><path d="M1.5 5.5 L4 8.5 L9.5 2" fill="none" stroke="#444" stroke-width="1.3"/></svg></div>
<div class="lb" style="left:403px;top:529px;height:17px;line-height:17px;letter-spacing:-0.5px">Έλεγχος Παραστατικού</div>
<div class="lb" style="left:564px;top:355px;width:85px;height:17px;line-height:15px;background:#C0C0C0;padding-left:2px;text-align:left;letter-spacing:-0.5px;">Προκαταβολή....:</div>
<div class="in" style="left:658px;top:355px;width:69px;height:15px;line-height:14px;text-align:right;padding-right:2px;">0,00</div>
<div class="lb" style="left:564px;top:374px;width:85px;height:17px;line-height:15px;background:#C0C0C0;padding-left:2px;text-align:left;letter-spacing:-0.5px;">Υπόλοιπο Ποσό.:</div>
<div class="in" style="left:658px;top:374px;width:69px;height:15px;line-height:14px;text-align:right;padding-right:2px;">0,00</div>
<div style="left:739px;top:374px;width:52px;height:17px;background:#A8A8A8"></div>
<div class="lb" style="left:740px;top:375px;width:32px;height:15px;line-height:14px;background:#FFFFFF;text-align:right;padding-right:2px;letter-spacing:-0.5px">101</div>
<div style="left:774px;top:375px;width:16px;height:15px;background:#E6E6E6"><svg width="9" height="5" viewBox="0 0 9 5" style="position:absolute;left:4px;top:7px"><path d="M0.5 0.5 L4.5 4.5 L8.5 0.5" fill="none" stroke="#333" stroke-width="1"/></svg></div>
<div class="lb" style="left:553px;top:392px;width:252px;height:17px;line-height:15px;background:#C0C0C0;padding-left:2px;text-align:left;letter-spacing:-0.5px;"></div>
<div class="t" style="left:629.0px;top:392px;width:20px;height:17px;line-height:15px;text-align:center;font-size:12px;color:#000">Σ</div>
<div class="t" style="left:643.4px;top:392px;width:20px;height:17px;line-height:15px;text-align:center;font-size:12px;color:#000">χ</div>
<div class="t" style="left:657.8px;top:392px;width:20px;height:17px;line-height:15px;text-align:center;font-size:12px;color:#000">ό</div>
<div class="t" style="left:672.2px;top:392px;width:20px;height:17px;line-height:15px;text-align:center;font-size:12px;color:#000">λ</div>
<div class="t" style="left:686.6px;top:392px;width:20px;height:17px;line-height:15px;text-align:center;font-size:12px;color:#000">ι</div>
<div class="t" style="left:701.0px;top:392px;width:20px;height:17px;line-height:15px;text-align:center;font-size:12px;color:#000">α</div>
<div class="in" style="left:553px;top:415px;width:251px;height:15px;border-right:1px solid #fff"></div>
<div class="in" style="left:553px;top:434px;width:251px;height:15px;"></div>
<div style="left:557px;top:456px;width:11px;height:11px;background:#fff;border:1px solid #333"><svg width="11" height="11" viewBox="0 0 11 11" style="position:absolute;left:0;top:0"><path d="M1.5 5.5 L4 8.5 L9.5 2" fill="none" stroke="#444" stroke-width="1.3"/></svg></div>
<div class="lb" style="left:572px;top:453px;width:138px;height:17px;line-height:15px;background:#FFFFFF;padding-left:2px;text-align:left;letter-spacing:-0.5px;">Εκτύπωση Σε Laser/Inkjet</div>
<div class="lb" style="left:712px;top:453px;width:33px;height:17px;line-height:15px;background:#C0C0C0;padding-left:2px;text-align:left;letter-spacing:-0.5px;">E-mail:</div>
<div class="in" style="left:752px;top:453px;width:146px;height:15px;line-height:14px;text-align:left;padding-left:2px;"><span style='letter-spacing:-0.6px'>info@sysoft.gr</span></div>
<div style="left:557px;top:475px;width:11px;height:11px;background:#fff;border:1px solid #333"><svg width="11" height="11" viewBox="0 0 11 11" style="position:absolute;left:0;top:0"><path d="M1.5 5.5 L4 8.5 L9.5 2" fill="none" stroke="#444" stroke-width="1.3"/></svg></div>
<div class="lb" style="left:572px;top:472px;width:67px;height:17px;line-height:15px;background:#FFFFFF;padding-left:2px;text-align:left;letter-spacing:-0.5px;">Κατακόρυφη</div>
<div class="lb" style="left:647px;top:472px;width:64px;height:17px;line-height:15px;background:#C0C0C0;padding-left:2px;text-align:left;letter-spacing:-0.5px;">Αντίγραφα:</div>
<div class="in" style="left:718px;top:472px;width:25px;height:14px;line-height:13px;text-align:right;padding-right:2px;">2</div>
<div style="left:557px;top:494px;width:11px;height:11px;background:#fff;border:1px solid #333"></div>
<div class="lb" style="left:572px;top:491px;width:92px;height:17px;line-height:15px;background:#FFFFFF;padding-left:2px;text-align:left;letter-spacing:-0.5px;">Αρχείο PDF</div>
<div style="left:671px;top:494px;width:10px;height:11px;background:#fff;border:1px solid #333"><div style="position:absolute;left:2px;top:2px;width:6px;height:7px;background:#333"></div></div>
<div class="lb" style="left:685px;top:491px;width:134px;height:17px;line-height:15px;background:#FFFFFF;padding-left:2px;text-align:left;letter-spacing:-0.5px;">Εξαγωγή σε Word(Data.rtf)</div>
<div style="left:837px;top:487px;width:147px;height:46px;background:#FFFFFF;"></div>
<svg style="left:823.5px;top:490.5px" width="14" height="14"><circle cx="7" cy="7" r="5.5" fill="#fff" stroke="#333" stroke-width="1"/></svg>
<svg style="left:823.5px;top:505.29999999999995px" width="14" height="14"><circle cx="7" cy="7" r="5.5" fill="#fff" stroke="#333" stroke-width="1"/></svg>
<svg style="left:823.5px;top:520px" width="14" height="14"><circle cx="7" cy="7" r="5.5" fill="#fff" stroke="#333" stroke-width="1"/></svg>
<div class="lb" style="left:838px;top:489px;height:15px;line-height:15px;letter-spacing:-0.5px">Εμφάνιση Καρτέλλας Πελάτη</div>
<div class="lb" style="left:838px;top:503px;height:15px;line-height:15px;letter-spacing:-0.5px">Εμφ/Εκτ&nbsp;&nbsp;&nbsp;Καρτέλλας Τηλεφ.</div>
<div class="lb" style="left:838px;top:517px;height:15px;line-height:15px;letter-spacing:-0.5px">Εμφ/Εκτ&nbsp;&nbsp;Καρτέλλας PAY TV</div>
<div style="left:890px;top:361px;width:85px;height:34px;background:#E1E1E1;border:1px solid #ADADAD"></div>
<div class="t" style="left:890px;top:372px;font-size:12.5px;color:#000;width:87px;text-align:center;transform:scaleX(0.8);transform-origin:center;">ΥΠΟΛΟΓΙΣΜΟΙ</div>
<div style="left:890px;top:405px;width:34px;height:34px;background:#E1E1E1;border:2px solid #0B6FD8;box-shadow:inset 1px 1px 0 #F6F0EA"></div>
<div style="left:939px;top:405px;width:36px;height:36px;background:#E1E1E1;border:1px solid #ADADAD;border-left-color:#F4F0EC;border-top-color:#DCD8D4"></div>
<div style="left:913px;top:447px;width:35px;height:35px;background:#E1E1E1;border:1px solid #ADADAD"></div>
<svg style="left:895;top:410" width="80" height="80" viewBox="895 410 80 80">
<path d="M900.5 415.5 H909.5 L911.5 417.5 V429.5 H900.5 Z" fill="none" stroke="#000" stroke-width="1.1"/>
<circle cx="909.7" cy="423.5" r="3.4" fill="#E8E8E8" stroke="#000" stroke-width="1.1"/>
<path d="M908 422 L909.5 421.5 M910.5 425.5 L911 424.5" stroke="#20D8E8" stroke-width="1.4"/>
<path d="M912.2 426 L915.5 429.2" stroke="#000" stroke-width="1.8"/>
<path d="M953.8 416.5 H962.5 L961 421.5 H951.8 Z" fill="#fff" stroke="#000" stroke-width="1"/>
<path d="M954.5 418.6 H960 M954 420.3 H959.5" stroke="#000" stroke-width="0.8"/>
<path d="M951 422.5 H963 Q965 422.5 965 424.5 V428 Q965 429.5 963 429.5 H951 Q949.5 429.5 949.5 428 V424 Q949.5 422.5 951 422.5 Z" fill="#fff" stroke="#000" stroke-width="1.2"/>
<path d="M950 424.5 H964" stroke="#000" stroke-width="1"/>
<path d="M950 427.6 H964" stroke="#000" stroke-width="1"/>
<rect x="956" y="425.5" width="2.6" height="1.4" fill="#D8D800"/>
<rect x="922.5" y="457" width="9.5" height="9" fill="#6E6E00" stroke="#000" stroke-width="1"/>
<rect x="925" y="457.5" width="4.5" height="3" fill="#E6E6A0"/>
<rect x="925" y="462.5" width="4.5" height="3.5" fill="#000"/>
<path d="M932 472 L938 462" stroke="#000" stroke-width="3"/>
<path d="M932 472 L938 462" stroke="#F0E000" stroke-width="1.5"/>
<rect x="936.5" y="460" width="2.5" height="2" fill="#C00000"/>
<path d="M923 472.5 H924 M925.5 472.5 H926.5 M928 472.5 H929" stroke="#000" stroke-width="1"/>
</svg>
<div style="left:984px;top:139px;width:380px;height:563px;background:#B03236;"></div>
<div style="left:985px;top:140px;width:378px;height:31px;background:#FFFFFF;"></div>
<div style="left:985px;top:171px;width:378px;height:1px;background:#A0A0A0;"></div>
<div style="left:985px;top:172px;width:378px;height:510px;background:#FFFFFF;"></div>
<div style="left:998px;top:179px;width:348px;height:494px;background:#fff;border:1px solid #000;border-right-width:2px;border-bottom-width:2px;box-shadow:1px 1px 9px 3px rgba(0,0,0,0.28)"></div>
<div style="left:985px;top:682px;width:378px;height:19px;background:linear-gradient(#F6F6F6,#E9E9E9);border-top:1px solid #D0D0D0;box-sizing:border-box;"></div>
<svg style="left:994;top:148" width="16" height="15" viewBox="0 0 16 15">
<defs><linearGradient id="gg" x1="0" y1="0" x2="1" y2="1"><stop offset="0" stop-color="#7FC983"/><stop offset="1" stop-color="#3E8443"/></linearGradient></defs>
<rect x="2.5" y="1" width="12.5" height="12.6" fill="url(#gg)"/>
<path d="M14.5 1.2 V13.6 H3" stroke="#0A1A0A" stroke-width="1" fill="none"/>
<rect x="6.6" y="3.2" width="6" height="2.8" fill="#9AD89B" stroke="#3E8443" stroke-width="0.7"/>
<rect x="1.8" y="1.6" width="1.3" height="1.1" fill="#000"/><rect x="3.1" y="1.6" width="1.1" height="1.1" fill="#fff"/><rect x="1.8" y="3.6" width="1.3" height="1.1" fill="#000"/><rect x="3.1" y="3.6" width="1.1" height="1.1" fill="#fff"/><rect x="1.8" y="5.6" width="1.3" height="1.1" fill="#000"/><rect x="3.1" y="5.6" width="1.1" height="1.1" fill="#fff"/><rect x="1.8" y="7.6" width="1.3" height="1.1" fill="#000"/><rect x="3.1" y="7.6" width="1.1" height="1.1" fill="#fff"/><rect x="1.8" y="9.6" width="1.3" height="1.1" fill="#000"/><rect x="3.1" y="9.6" width="1.1" height="1.1" fill="#fff"/><rect x="1.8" y="11.6" width="1.3" height="1.1" fill="#000"/><rect x="3.1" y="11.6" width="1.1" height="1.1" fill="#fff"/>
</svg>
<div class="t" style="left:1064px;top:151px;font-size:12px;color:#222;">Έκδοση Λογαριασμού</div>
<svg style="left:1230;top:145" width="130" height="25" viewBox="1230 145 130 25">
<rect x="1243" y="157" width="10" height="1" fill="#333"/>
<rect x="1289.5" y="152.5" width="9.5" height="9.5" fill="none" stroke="#333" stroke-width="1"/>
<path d="M1335.2 152.2 L1345.2 162.2 M1345.2 152.2 L1335.2 162.2" stroke="#333" stroke-width="1"/>
</svg>
<div style="left:1078px;top:219px;width:240px;height:1.2px;background:#000;"></div>
<div class="t" style="left:1119px;top:223px;font-size:10px;font-family:'Liberation Serif',serif;color:#111;font-weight:bold;letter-spacing:-0.3px">Απόδειξη Παροχής Υπηρεσιών</div>
<div style="left:1078px;top:238px;width:240px;height:1.2px;background:#000;"></div>
<div class="t" style="left:1077px;top:240px;font-size:5.2px;font-family:'Liberation Sans',sans-serif;color:#111;font-weight:bold;">Ημερ/νία Έκδοσης</div>
<div class="t" style="left:1140px;top:240px;font-size:5.2px;font-family:'Liberation Sans',sans-serif;color:#111;font-weight:bold;">29/10/2015</div>
<div class="t" style="left:1171px;top:240px;font-size:5.2px;font-family:'Liberation Sans',sans-serif;color:#111;font-weight:bold;">Ώρα Έκδοσης:</div>
<div class="t" style="left:1221px;top:240px;font-size:5.2px;font-family:'Liberation Sans',sans-serif;color:#111;font-weight:bold;">2:15:00 μμ</div>
<div class="t" style="left:1246px;top:240px;font-size:5.2px;font-family:'Liberation Sans',sans-serif;color:#111;font-weight:bold;">Αρ.Παραστ.:</div>
<div class="t" style="left:1306px;top:240px;font-size:5.2px;font-family:'Liberation Sans',sans-serif;color:#111;font-weight:bold;">1704</div>
<div class="t" style="left:1077px;top:248px;font-size:5.2px;font-family:'Liberation Sans',sans-serif;color:#111;font-weight:bold;">Πελάτης.........:</div>
<div class="t" style="left:1125px;top:247px;font-size:6.5px;font-family:'Liberation Serif',serif;color:#444;">TEST</div>
<div class="t" style="left:1246px;top:248px;font-size:5.2px;font-family:'Liberation Sans',sans-serif;color:#111;font-weight:bold;">Επάγγελμα:</div>
<div class="t" style="left:1077px;top:256px;font-size:5.2px;font-family:'Liberation Sans',sans-serif;color:#111;font-weight:bold;">Διεύθυνση........:</div>
<div class="t" style="left:1246px;top:256px;font-size:5.2px;font-family:'Liberation Sans',sans-serif;color:#111;font-weight:bold;">Π ό λ η.....:</div>
<div class="t" style="left:1077px;top:264px;font-size:5.2px;font-family:'Liberation Sans',sans-serif;color:#111;font-weight:bold;">Α.Τ./ΑΔΙΑ Φ.Μ.....:</div>
<div class="t" style="left:1077px;top:274px;font-size:5.2px;font-family:'Liberation Sans',sans-serif;color:#111;font-weight:bold;">-</div>
<div class="t" style="left:1084px;top:284px;font-size:5.2px;font-family:'Liberation Sans',sans-serif;color:#111;font-weight:bold;">Arrival</div>
<div class="t" style="left:1112px;top:284px;font-size:5.2px;font-family:'Liberation Sans',sans-serif;color:#111;font-weight:bold;">Depart.</div>
<div class="t" style="left:1133px;top:284px;font-size:5.2px;font-family:'Liberation Sans',sans-serif;color:#111;font-weight:bold;">Room Customer</div>
<div class="t" style="left:1174px;top:284px;font-size:5.2px;font-family:'Liberation Sans',sans-serif;color:#111;font-weight:bold;">Persons</div>
<div class="t" style="left:1236px;top:284px;font-size:5.2px;font-family:'Liberation Sans',sans-serif;color:#111;font-weight:bold;">μμ Days</div>
<div class="t" style="left:1264px;top:284px;font-size:5.2px;font-family:'Liberation Sans',sans-serif;color:#111;font-weight:bold;">Price/Day</div>
<div class="t" style="left:1297px;top:284px;font-size:5.2px;font-family:'Liberation Sans',sans-serif;color:#111;font-weight:bold;">Total</div>
<div class="t" style="left:1080px;top:291px;font-size:5.2px;font-family:'Liberation Sans',sans-serif;color:#111;font-weight:bold;">Άφιξη</div>
<div class="t" style="left:1104px;top:291px;font-size:5.2px;font-family:'Liberation Sans',sans-serif;color:#111;font-weight:bold;">Αναχώρηση Δωμ. Πελάτης</div>
<div class="t" style="left:1178px;top:291px;font-size:5.2px;font-family:'Liberation Sans',sans-serif;color:#111;font-weight:bold;">Άτομα</div>
<div class="t" style="left:1198px;top:291px;font-size:5.2px;font-family:'Liberation Sans',sans-serif;color:#111;font-weight:bold;">ΕίδοςΚατΣυμφ</div>
<div class="t" style="left:1238px;top:291px;font-size:5.2px;font-family:'Liberation Sans',sans-serif;color:#111;font-weight:bold;">μμ Ημέρ.</div>
<div class="t" style="left:1265px;top:291px;font-size:5.2px;font-family:'Liberation Sans',sans-serif;color:#111;font-weight:bold;">Τιμή Δωμ</div>
<div class="t" style="left:1298px;top:291px;font-size:5.2px;font-family:'Liberation Sans',sans-serif;color:#111;font-weight:bold;">Σύνολο</div>
<div class="t" style="left:1078px;top:298px;font-size:5.2px;font-family:'Liberation Sans',sans-serif;color:#111;font-weight:bold;">26/6/2015</div>
<div class="t" style="left:1110px;top:298px;font-size:5.2px;font-family:'Liberation Sans',sans-serif;color:#111;font-weight:bold;">12/7/2015101</div>
<div class="t" style="left:1179px;top:298px;font-size:5.2px;font-family:'Liberation Sans',sans-serif;color:#111;font-weight:bold;">2&nbsp;&nbsp; 0 Δωρ. All View BB</div>
<div class="t" style="left:1238px;top:298px;font-size:5.2px;font-family:'Liberation Sans',sans-serif;color:#111;font-weight:bold;">O&nbsp;&nbsp;&nbsp;&nbsp; 16</div>
<div class="t" style="left:1277px;top:298px;font-size:5.2px;font-family:'Liberation Sans',sans-serif;color:#111;font-weight:bold;">100,00</div>
<div class="t" style="left:1301px;top:298px;font-size:5.2px;font-family:'Liberation Sans',sans-serif;color:#111;font-weight:bold;">1.600,00</div>
<div class="t" style="left:1077px;top:308px;font-size:5.2px;font-family:'Liberation Sans',sans-serif;color:#111;font-weight:bold;">Γενικό Σύνολο:</div>
<div class="t" style="left:1301px;top:308px;font-size:5.2px;font-family:'Liberation Sans',sans-serif;color:#111;font-weight:bold;">1.600,00</div>
<div class="t" style="left:1259px;top:317px;font-size:5.2px;font-family:'Liberation Sans',sans-serif;color:#111;font-weight:bold;">0,00</div>
<div class="t" style="left:1306px;top:315px;font-size:5.2px;font-family:'Liberation Sans',sans-serif;color:#111;font-weight:bold;">0,00</div>
<div class="t" style="left:1077px;top:322px;font-size:5.2px;font-family:'Liberation Sans',sans-serif;color:#111;font-weight:bold;">Τρ.Πληρωμής:</div>
<div class="t" style="left:1121px;top:322px;font-size:4.5px;font-family:'Liberation Sans',sans-serif;color:#111;font-weight:bold;">Μετρητά</div>
<div class="t" style="left:1121px;top:328px;font-size:4.5px;font-family:'Liberation Sans',sans-serif;color:#111;font-weight:bold;">Μετρητά</div>
<div class="t" style="left:1174px;top:321px;font-size:5.2px;font-family:'Liberation Sans',sans-serif;color:#111;font-weight:bold;">1.600,00</div>
<div class="t" style="left:1185px;top:327px;font-size:5.2px;font-family:'Liberation Sans',sans-serif;color:#111;font-weight:bold;">0,00</div>
<div class="t" style="left:1214px;top:327px;font-size:5.2px;font-family:'Liberation Sans',sans-serif;color:#111;font-weight:bold;">Προκαταβολή:</div>
<div class="t" style="left:1306px;top:325px;font-size:5.2px;font-family:'Liberation Sans',sans-serif;color:#111;font-weight:bold;">0,00</div>
<div class="t" style="left:1214px;top:337px;font-size:5.2px;font-family:'Liberation Sans',sans-serif;color:#111;font-weight:bold;">Extra.........:</div>
<div class="t" style="left:1306px;top:335px;font-size:5.2px;font-family:'Liberation Sans',sans-serif;color:#111;font-weight:bold;">0,00</div>
<div class="t" style="left:1214px;top:349px;font-size:5.2px;font-family:'Liberation Sans',sans-serif;color:#111;font-weight:bold;">Πληρωτέο......:</div>
<div class="t" style="left:1297px;top:348px;font-size:6px;font-family:'Liberation Sans',sans-serif;color:#111;font-weight:bold;">1.600,00</div>
<div class="t" style="left:1121px;top:362px;font-size:5.5px;font-family:'Liberation Sans',sans-serif;color:#111;font-weight:bold;">Α ν ά λ υ σ η</div>
<div class="t" style="left:1164px;top:362px;font-size:4.3px;font-family:'Liberation Sans',sans-serif;color:#111;font-weight:bold;">Απόδειξη Παροχής Υπηρεσιών</div>
<div class="t" style="left:1167px;top:374px;font-size:5.2px;font-family:'Liberation Sans',sans-serif;color:#111;font-weight:bold;">Δ.Φ.</div>
<div class="t" style="left:1231px;top:372px;font-size:5.5px;font-family:'Liberation Sans',sans-serif;color:#111;font-weight:bold;">Α ν ά λ υ σ η</div>
<div class="t" style="left:1300px;top:372px;font-size:5.2px;font-family:'Liberation Sans',sans-serif;color:#111;font-weight:bold;">Φ.Π.Α</div>
<div class="t" style="left:1107px;top:382px;font-size:5.2px;font-family:'Liberation Sans',sans-serif;color:#111;font-weight:bold;">Συν.Αξία</div>
<div class="t" style="left:1136px;top:382px;font-size:5.2px;font-family:'Liberation Sans',sans-serif;color:#111;font-weight:bold;">Καθ.Αξία</div>
<div class="t" style="left:1168px;top:382px;font-size:5.2px;font-family:'Liberation Sans',sans-serif;color:#111;font-weight:bold;">6,5 %</div>
<div class="t" style="left:1184px;top:382px;font-size:5.2px;font-family:'Liberation Sans',sans-serif;color:#111;font-weight:bold;">Υποκ.Αξία</div>
<div class="t" style="left:1225px;top:382px;font-size:5.2px;font-family:'Liberation Sans',sans-serif;color:#111;font-weight:bold;">6,5 %</div>
<div class="t" style="left:1255px;top:382px;font-size:5.2px;font-family:'Liberation Sans',sans-serif;color:#111;font-weight:bold;">23 %</div>
<div class="t" style="left:1287px;top:382px;font-size:5.2px;font-family:'Liberation Sans',sans-serif;color:#111;font-weight:bold;">13%</div>
<div class="t" style="left:1316px;top:382px;font-size:5.2px;font-family:'Liberation Sans',sans-serif;color:#111;font-weight:bold;">0%</div>
<div class="t" style="left:1079px;top:393px;font-size:5.2px;font-family:'Liberation Sans',sans-serif;color:#111;font-weight:bold;">Διαμέτιο</div>
<div class="t" style="left:1087px;top:393px;width:40px;text-align:right;font-size:4.6px;font-weight:bold;color:#111">1.600,00</div>
<div class="t" style="left:1122px;top:393px;width:40px;text-align:right;font-size:4.6px;font-weight:bold;color:#111">1.496,88</div>
<div class="t" style="left:1141px;top:393px;width:40px;text-align:right;font-size:4.6px;font-weight:bold;color:#111">7,47</div>
<div class="t" style="left:1170px;top:393px;width:40px;text-align:right;font-size:4.6px;font-weight:bold;color:#111">1.502,33</div>
<div class="t" style="left:1201px;top:393px;width:40px;text-align:right;font-size:4.6px;font-weight:bold;color:#111">97,63</div>
<div class="t" style="left:1079px;top:401px;font-size:5.2px;font-family:'Liberation Sans',sans-serif;color:#111;font-weight:bold;">Πρωινό</div>
<div class="t" style="left:1087px;top:401px;width:40px;text-align:right;font-size:4.6px;font-weight:bold;color:#111">0,00</div>
<div class="t" style="left:1122px;top:401px;width:40px;text-align:right;font-size:4.6px;font-weight:bold;color:#111">0,00</div>
<div class="t" style="left:1141px;top:401px;width:40px;text-align:right;font-size:4.6px;font-weight:bold;color:#111">0,00</div>
<div class="t" style="left:1170px;top:401px;width:40px;text-align:right;font-size:4.6px;font-weight:bold;color:#111">0,00</div>
<div class="t" style="left:1201px;top:401px;width:40px;text-align:right;font-size:4.6px;font-weight:bold;color:#111">0,00</div>
<div class="t" style="left:1230px;top:401px;width:40px;text-align:right;font-size:4.6px;font-weight:bold;color:#111">0,00</div>
<div class="t" style="left:1261px;top:401px;width:40px;text-align:right;font-size:4.6px;font-weight:bold;color:#111">0,00</div>
<div class="t" style="left:1079px;top:409px;font-size:5.2px;font-family:'Liberation Sans',sans-serif;color:#111;font-weight:bold;">Σύνολο</div>
<div class="t" style="left:1087px;top:409px;width:40px;text-align:right;font-size:4.6px;font-weight:bold;color:#111">1.600,00</div>
<div class="t" style="left:1122px;top:409px;width:40px;text-align:right;font-size:4.6px;font-weight:bold;color:#111">1.496,88</div>
<div class="t" style="left:1141px;top:409px;width:40px;text-align:right;font-size:4.6px;font-weight:bold;color:#111">7,47</div>
<div class="t" style="left:1170px;top:409px;width:40px;text-align:right;font-size:4.6px;font-weight:bold;color:#111">1.502,33</div>
<div class="t" style="left:1201px;top:409px;width:40px;text-align:right;font-size:4.6px;font-weight:bold;color:#111">97,63</div>
<div class="t" style="left:1230px;top:409px;width:40px;text-align:right;font-size:4.6px;font-weight:bold;color:#111">0,00</div>
<div class="t" style="left:1261px;top:409px;width:40px;text-align:right;font-size:4.6px;font-weight:bold;color:#111">0,00</div>
<div class="t" style="left:1079px;top:418px;font-size:5.2px;font-family:'Liberation Sans',sans-serif;color:#111;font-weight:bold;">B a r</div>
<div class="t" style="left:1087px;top:418px;width:40px;text-align:right;font-size:4.6px;font-weight:bold;color:#111">0,00</div>
<div class="t" style="left:1122px;top:418px;width:40px;text-align:right;font-size:4.6px;font-weight:bold;color:#111">0,00</div>
<div class="t" style="left:1141px;top:418px;width:40px;text-align:right;font-size:4.6px;font-weight:bold;color:#111">0,00</div>
<div class="t" style="left:1170px;top:418px;width:40px;text-align:right;font-size:4.6px;font-weight:bold;color:#111">0,00</div>
<div class="t" style="left:1201px;top:418px;width:40px;text-align:right;font-size:4.6px;font-weight:bold;color:#111">0,00</div>
<div class="t" style="left:1230px;top:418px;width:40px;text-align:right;font-size:4.6px;font-weight:bold;color:#111">0,00</div>
<div class="t" style="left:1261px;top:418px;width:40px;text-align:right;font-size:4.6px;font-weight:bold;color:#111">0,00</div>
<div class="t" style="left:1290px;top:418px;width:40px;text-align:right;font-size:4.6px;font-weight:bold;color:#111">0,00</div>
<div class="t" style="left:1079px;top:426px;font-size:5.2px;font-family:'Liberation Sans',sans-serif;color:#111;font-weight:bold;">Τηλέφωνα</div>
<div class="t" style="left:1087px;top:426px;width:40px;text-align:right;font-size:4.6px;font-weight:bold;color:#111">0,00</div>
<div class="t" style="left:1122px;top:426px;width:40px;text-align:right;font-size:4.6px;font-weight:bold;color:#111">0,00</div>
<div class="t" style="left:1141px;top:426px;width:40px;text-align:right;font-size:4.6px;font-weight:bold;color:#111">0,00</div>
<div class="t" style="left:1170px;top:426px;width:40px;text-align:right;font-size:4.6px;font-weight:bold;color:#111">0,00</div>
<div class="t" style="left:1201px;top:426px;width:40px;text-align:right;font-size:4.6px;font-weight:bold;color:#111">0,00</div>
<div class="t" style="left:1230px;top:426px;width:40px;text-align:right;font-size:4.6px;font-weight:bold;color:#111">0,00</div>
<div class="t" style="left:1261px;top:426px;width:40px;text-align:right;font-size:4.6px;font-weight:bold;color:#111">0,00</div>
<div class="t" style="left:1290px;top:426px;width:40px;text-align:right;font-size:4.6px;font-weight:bold;color:#111">0,00</div>
<div class="t" style="left:1079px;top:433px;font-size:5.2px;font-family:'Liberation Sans',sans-serif;color:#111;font-weight:bold;">Διάφορα</div>
<div class="t" style="left:1087px;top:433px;width:40px;text-align:right;font-size:4.6px;font-weight:bold;color:#111">0,00</div>
<div class="t" style="left:1122px;top:433px;width:40px;text-align:right;font-size:4.6px;font-weight:bold;color:#111">0,00</div>
<div class="t" style="left:1141px;top:433px;width:40px;text-align:right;font-size:4.6px;font-weight:bold;color:#111">0,00</div>
<div class="t" style="left:1170px;top:433px;width:40px;text-align:right;font-size:4.6px;font-weight:bold;color:#111">0,00</div>
<div class="t" style="left:1201px;top:433px;width:40px;text-align:right;font-size:4.6px;font-weight:bold;color:#111">0,00</div>
<div class="t" style="left:1230px;top:433px;width:40px;text-align:right;font-size:4.6px;font-weight:bold;color:#111">0,00</div>
<div class="t" style="left:1261px;top:433px;width:40px;text-align:right;font-size:4.6px;font-weight:bold;color:#111">0,00</div>
<div class="t" style="left:1290px;top:433px;width:40px;text-align:right;font-size:4.6px;font-weight:bold;color:#111">0,00</div>
<div class="t" style="left:1079px;top:443px;font-size:5.2px;font-family:'Liberation Sans',sans-serif;color:#111;font-weight:bold;">Γ.Σύνολο</div>
<div class="t" style="left:1087px;top:443px;width:40px;text-align:right;font-size:4.6px;font-weight:bold;color:#111">1.600,00</div>
<div class="t" style="left:1122px;top:443px;width:40px;text-align:right;font-size:4.6px;font-weight:bold;color:#111">1.496,88</div>
<div class="t" style="left:1141px;top:443px;width:40px;text-align:right;font-size:4.6px;font-weight:bold;color:#111">7,47</div>
<div class="t" style="left:1170px;top:443px;width:40px;text-align:right;font-size:4.6px;font-weight:bold;color:#111">1.502,33</div>
<div class="t" style="left:1201px;top:443px;width:40px;text-align:right;font-size:4.6px;font-weight:bold;color:#111">97,63</div>
<div class="t" style="left:1230px;top:443px;width:40px;text-align:right;font-size:4.6px;font-weight:bold;color:#111">0,00</div>
<div class="t" style="left:1261px;top:443px;width:40px;text-align:right;font-size:4.6px;font-weight:bold;color:#111">0,00</div>
<div class="t" style="left:1290px;top:443px;width:40px;text-align:right;font-size:4.6px;font-weight:bold;color:#111">0,00</div>
<div class="t" style="left:990px;top:686px;font-size:11.5px;color:#555;">Σελίδα:</div>
<svg style="left:1030;top:684" width="140" height="16" viewBox="1030 684 140 16">
<g fill="#B8B8B8">
<rect x="1036" y="688" width="1" height="7"/><path d="M1041 688 V695 L1037.5 691.5 Z"/>
<path d="M1054 688 V695 L1050.5 691.5 Z"/>
<path d="M1120 688 V695 L1123.5 691.5 Z"/>
<path d="M1135 688 V695 L1138.5 691.5 Z"/><rect x="1139" y="688" width="1" height="7"/>
<path d="M1149 688 V695 L1152.5 691.5 Z"/>
</g>
<rect x="1154" y="688" width="6" height="6" fill="#F6EBC6"/>
</svg>
<div style="left:1061px;top:684px;width:48px;height:14px;background:#fff;border:1px solid #C8C8C8"></div>
<div class="t" style="left:1064px;top:686px;font-size:12px;color:#000;">1</div>
<div style="left:1168px;top:683px;width:1px;height:18px;background:#D0D0D0;"></div>
<svg style="left:1177;top:684" width="20" height="16" viewBox="0 0 20 16">
<path d="M1 1 H17 L11 8 V15 L7 13 V8 Z" fill="#8E8E8E"/>
</svg>
<div class="t" style="left:1197px;top:686px;font-size:12px;color:#8A8A8A;">Φιλτραρίστηκε</div>
<div style="left:1284px;top:683px;width:1px;height:18px;background:#D0D0D0;"></div>
<div class="t" style="left:8px;top:712px;font-size:11.2px;color:#333;">Έτοιμο</div>
<div class="t" style="left:963px;top:711px;font-size:11.6px;color:#333;">Κλείδωμα αριθμών</div>
<div style="left:1118px;top:706px;width:38px;height:21px;background:#D2D2D2;"></div>
<svg style="left:1085;top:706" width="280" height="21" viewBox="1085 706 280 21">
<g fill="none" stroke="#555" stroke-width="1">
<path d="M1097.5 711.5 H1105.5 V723.5 H1097.5 Z M1094 714.5 H1099 M1094 720.5 H1099"/>
<path d="M1130.5 711.5 H1142.5 V722.5 H1130.5 Z M1130.5 714 H1142.5"/>
<circle cx="1140" cy="720" r="2.5"/>
<path d="M1142 722 L1144 724"/>
<path d="M1168.5 710 V723.5 H1183.5 V719.5 H1168.5 M1172 722 V720 M1175 722 V720 M1178 722 V720 M1180 718 L1183 712 M1168.5 714 L1174 717"/>
</g>
<rect x="1200" y="716" width="6" height="1.5" fill="#444"/>
<rect x="1209" y="716" width="100" height="1" fill="#9A9A9A"/>
<rect x="1259" y="713" width="1" height="6" fill="#9A9A9A"/>
<rect x="1228" y="711" width="4" height="12" fill="#444"/>
<path d="M1312 716.7 H1320 M1316 712.7 V720.7" stroke="#444" stroke-width="1.6"/>
</svg>
<div class="t" style="left:1335px;top:711px;font-size:12px;color:#333;">44%</div>
</body></html>
